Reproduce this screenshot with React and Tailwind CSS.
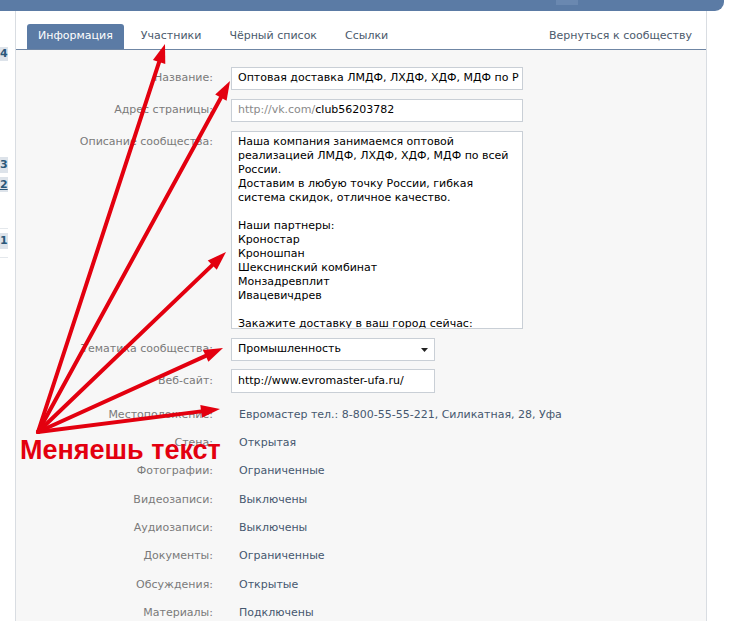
import React from 'react';

const fields = [
  { label: 'Местоположение:', value: 'Евромастер тел.: 8-800-55-55-221, Силикатная, 28, Уфа' },
  { label: 'Стена:', value: 'Открытая' },
  { label: 'Фотографии:', value: 'Ограниченные' },
  { label: 'Видеозаписи:', value: 'Выключены' },
  { label: 'Аудиозаписи:', value: 'Выключены' },
  { label: 'Документы:', value: 'Ограниченные' },
  { label: 'Обсуждения:', value: 'Открытые' },
  { label: 'Материалы:', value: 'Подключены' },
];

const description = [
  'Наша компания занимаемся оптовой',
  'реализацией ЛМДФ, ЛХДФ, ХДФ, МДФ по всей',
  'России.',
  'Доставим в любую точку России, гибкая',
  'система скидок, отличное качество.',
  '',
  'Наши партнеры:',
  'Кроностар',
  'Кроношпан',
  'Шекснинский комбинат',
  'Монзадревплит',
  'Ивацевичдрев',
  '',
  'Закажите доставку в ваш город сейчас:',
];

const origin = [38, 432];
const tips = [
  [165, 44],
  [230, 81],
  [226, 252],
  [223, 348],
  [220, 409],
];

const Arrow = ({ tip }) => {
  const [ox, oy] = origin;
  const [tx, ty] = tip;
  const len = Math.hypot(tx - ox, ty - oy);
  const dx = (tx - ox) / len;
  const dy = (ty - oy) / len;
  const bx = tx - dx * 19;
  const by = ty - dy * 19;
  const nx = -dy * 6.5;
  const ny = dx * 6.5;
  return (
    <g>
      <line x1={ox} y1={oy} x2={bx} y2={by} stroke="#e3000f" strokeWidth="4" strokeLinecap="round" />
      <polygon points={`${tx},${ty} ${bx + nx},${by + ny} ${bx - nx},${by - ny}`} fill="#e3000f" />
    </g>
  );
};

const Label = ({ children, className = '' }) => (
  <div className={`w-[197px] shrink-0 text-right text-[#7a7a7a] ${className}`}>{children}</div>
);

export default function App() {
  return (
    <div
      className="relative w-[754px] h-[621px] overflow-hidden bg-white text-[11px]"
      style={{ fontFamily: '"DejaVu Sans", sans-serif' }}
    >
      {/* top bar */}
      <div className="relative h-[11px] w-[724px] rounded-br-[9px] bg-[#5b7ba5]">
        <div className="absolute left-[556px] top-0 h-[5px] w-[22px] bg-[#6a88b0]" />
      </div>

      <div className="flex">
        {/* left strip */}
        <div className="w-[15px] shrink-0 flex flex-col">
          <div className="mt-[36px] h-[14px] w-[8px] overflow-hidden bg-[#dde3ea] text-[#2b587a] text-right font-bold leading-[14px] pr-[1px]">4</div>
          <div className="mt-[96px] h-[16px] w-[8px] overflow-hidden bg-[#dde3ea] text-[#2b587a] text-right font-bold leading-[16px] pr-[1px]">3</div>
          <div className="mt-[4px] h-[15px] w-[8px] overflow-hidden bg-[#dde3ea] text-[#2b587a] text-right font-bold leading-[15px] pr-[1px] underline">2</div>
          <div className="mt-[36px] h-px w-[8px] bg-[#e4e8ec]" />
          <div className="mt-[4px] h-[16px] w-[8px] overflow-hidden bg-[#dde3ea] text-[#2b587a] text-right font-bold leading-[16px] pr-[1px]">1</div>
          <div className="mt-[8px] h-px w-[8px] bg-[#e4e8ec]" />
        </div>

        {/* panel */}
        <div className="w-[692px] h-[610px] border-l border-r border-[#d9dde2] bg-[#f7f7f7]">
          {/* tabs */}
          <div className="flex items-end bg-white pt-[13px] pl-[11px] pr-[14px] border-b border-[#6f86a4]">
            <div className="flex gap-[6px]">
              <div className="h-[25px] px-[11px] flex items-center rounded-t-[3px] bg-[#5b7ba5] text-white">Информация</div>
              <div className="h-[25px] px-[11px] flex items-center text-[#4b5a6c]">Участники</div>
              <div className="h-[25px] px-[11px] flex items-center text-[#4b5a6c]">Чёрный список</div>
              <div className="h-[25px] px-[11px] flex items-center text-[#4b5a6c]">Ссылки</div>
            </div>
            <div className="ml-auto h-[25px] flex items-center text-[#4b5a6c]">Вернуться к сообществу</div>
          </div>

          {/* form */}
          <div className="flex flex-col pt-[17px]">
            <div className="flex items-center">
              <Label>Название:</Label>
              <div className="ml-[18px] h-[23px] w-[292px] border border-[#c9cfd6] bg-white pl-[6px] flex items-center overflow-hidden whitespace-nowrap text-black">
                Оптовая доставка ЛМДФ, ЛХДФ, ХДФ, МДФ по Р
              </div>
            </div>

            <div className="mt-[9px] flex items-center">
              <Label>Адрес страницы:</Label>
              <div className="ml-[18px] h-[23px] w-[292px] border border-[#c9cfd6] bg-white pl-[6px] flex items-center whitespace-nowrap">
                <span className="text-[#8a8a8a]">http://vk.com/</span>
                <span className="text-black">club56203782</span>
              </div>
            </div>

            <div className="mt-[9px] flex items-start">
              <Label className="pt-[4px] leading-[14px]">Описание сообщества:</Label>
              <div className="ml-[18px] h-[198px] w-[292px] border border-[#c9cfd6] bg-white pl-[6px] pt-[3px] overflow-hidden text-black leading-[14px]">
                {description.map((line, i) => (
                  <div key={i} className="h-[14px] whitespace-nowrap">{line}</div>
                ))}
              </div>
            </div>

            <div className="mt-[9px] flex items-center">
              <Label>Тематика сообщества:</Label>
              <div className="ml-[18px] h-[23px] w-[204px] border border-[#c9cfd6] bg-white pl-[6px] pr-[6px] flex items-center text-black">
                <span>Промышленность</span>
                <svg className="ml-auto" width="7" height="4" viewBox="0 0 7 4">
                  <polygon points="0,0 7,0 3.5,4" fill="#222" />
                </svg>
              </div>
            </div>

            <div className="mt-[8px] flex items-center">
              <Label>Веб-сайт:</Label>
              <div className="ml-[18px] h-[24px] w-[204px] border border-[#c9cfd6] bg-white pl-[6px] flex items-center text-black whitespace-nowrap">
                http://www.evromaster-ufa.ru/
              </div>
            </div>

            <div className="mt-[8px] flex flex-col">
              {fields.map((f) => (
                <div key={f.label} className="h-[28.3px] flex items-center">
                  <Label>{f.label}</Label>
                  <div className="ml-[26px] text-[#46586f] whitespace-nowrap">{f.value}</div>
                </div>
              ))}
            </div>
          </div>
        </div>
      </div>

      {/* annotation */}
      <svg className="absolute inset-0 pointer-events-none" width="754" height="621">
        {tips.map((t, i) => (
          <Arrow key={i} tip={t} />
        ))}
      </svg>
      <div
        className="absolute left-[20px] top-[437px] text-[27px] font-bold leading-none text-[#e3000f] whitespace-nowrap"
        style={{ fontFamily: '"Liberation Sans", Arial, sans-serif' }}
      >
        Меняешь текст
      </div>
    </div>
  );
}
